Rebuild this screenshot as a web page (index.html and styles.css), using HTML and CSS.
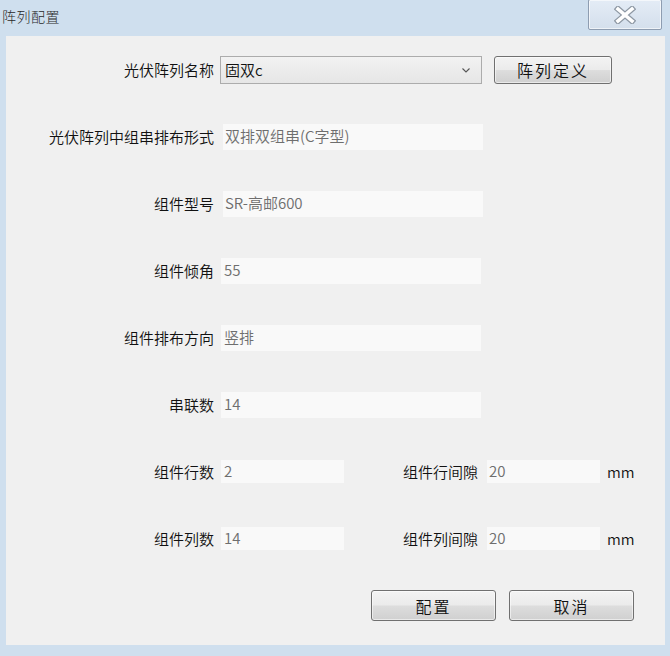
FILE: index.html
```html
<!DOCTYPE html>
<html lang="zh">
<head>
<meta charset="utf-8">
<title>阵列配置</title>
<link rel="stylesheet" href="styles.css">
</head>
<body>
<div class="window">
  <div class="titlebar">
    <span class="title">阵列配置</span>
    <button class="close" aria-label="关闭">
      <svg width="22" height="18" viewBox="0 0 22 18">
        <path d="M4 3 L18 15 M18 3 L4 15" stroke="#8d97a3" stroke-width="6" stroke-linecap="square" fill="none"/>
        <path d="M4 3 L18 15 M18 3 L4 15" stroke="#ffffff" stroke-width="3.6" stroke-linecap="square" fill="none"/>
      </svg>
    </button>
  </div>
  <div class="panel">
    <div class="row">
      <label class="lbl">光伏阵列名称</label>
      <div class="combo">
        <span>固双c</span>
        <svg class="chev" width="8" height="5" viewBox="0 0 8 5"><path d="M0.5 0.5 L4 4 L7.5 0.5" stroke="#555" stroke-width="1.1" fill="none"/></svg>
      </div>
      <button class="btn btn-def">阵列定义</button>
    </div>
    <div class="row">
      <label class="lbl">光伏阵列中组串排布形式</label>
      <div class="field wide shift">双排双组串(C字型)</div>
    </div>
    <div class="row">
      <label class="lbl">组件型号</label>
      <div class="field wide shift">SR-高邮600</div>
    </div>
    <div class="row">
      <label class="lbl">组件倾角</label>
      <div class="field wide">55</div>
    </div>
    <div class="row">
      <label class="lbl">组件排布方向</label>
      <div class="field wide">竖排</div>
    </div>
    <div class="row">
      <label class="lbl">串联数</label>
      <div class="field wide">14</div>
    </div>
    <div class="row">
      <label class="lbl">组件行数</label>
      <div class="field short">2</div>
      <label class="lbl2">组件行间隙</label>
      <div class="field gapf">20</div>
      <span class="unit">mm</span>
    </div>
    <div class="row">
      <label class="lbl">组件列数</label>
      <div class="field short">14</div>
      <label class="lbl2">组件列间隙</label>
      <div class="field gapf">20</div>
      <span class="unit">mm</span>
    </div>
    <div class="row actions">
      <button class="btn btn-act">配置</button>
      <button class="btn btn-act">取消</button>
    </div>
  </div>
</div>
</body>
</html>
```
FILE: styles.css
```css
* { box-sizing: border-box; }
html, body {
  margin: 0;
  padding: 0;
  width: 670px;
  height: 656px;
  overflow: hidden;
  background: #cfdfee;
  font-family: "Noto Sans CJK SC", "Noto Sans", sans-serif;
}
.window {
  width: 670px;
  height: 656px;
  display: flex;
  flex-direction: column;
}
.titlebar {
  height: 36px;
  display: flex;
  align-items: flex-start;
  justify-content: space-between;
}
.title {
  margin: 5px 0 0 2px;
  font-size: 14px;
  line-height: 22px;
  font-weight: 300;
  color: #2a2a2a;
  letter-spacing: 0.5px;
}
.close {
  margin: -1px 8px 0 0;
  width: 74px;
  height: 31px;
  border: 1px solid #8e9db1;
  border-radius: 2px;
  background: linear-gradient(#e4ecf6, #d4dfec);
  display: flex;
  align-items: center;
  justify-content: center;
  padding: 0;
  box-shadow: inset 0 0 0 1px rgba(255,255,255,0.6);
}
.panel {
  margin: 0 5px 0 6px;
  height: 609px;
  background: #f0f0f0;
  display: flex;
  flex-direction: column;
}
.row {
  height: 67px;
  display: flex;
  align-items: center;
  flex: none;
}
.lbl {
  width: 208px;
  text-align: right;
  font-size: 15px;
  font-weight: 350;
  color: #111;
  margin-right: 7px;
  white-space: nowrap;
}
.lbl2 {
  width: 134px;
  text-align: right;
  font-size: 15px;
  font-weight: 350;
  color: #111;
  margin-right: 9px;
  white-space: nowrap;
}
.field {
  height: 26px;
  background: #f9f9f9;
  color: #6e6e6e;
  font-size: 15px;
  font-weight: 350;
  line-height: 24px;
  padding-left: 3px;
  white-space: nowrap;
}
.field.wide { width: 260px; }
.field.shift { margin-left: 2px; padding-left: 2px; }
.field.short { width: 123px; height: 23px; line-height: 22px; }
.field.gapf { width: 113px; height: 23px; line-height: 22px; padding-left: 2px; }
.unit {
  margin-left: 7px;
  font-size: 15px;
  font-weight: 350;
  color: #111;
}
.combo {
  width: 262px;
  height: 28px;
  margin-left: -1px;
  border: 1px solid #acacac;
  background: linear-gradient(#f2f2f2, #e6e6e6);
  display: flex;
  align-items: center;
  justify-content: space-between;
  padding: 0 11px 0 4px;
  font-size: 15px;
  font-weight: 350;
  color: #111;
}
.chev { margin-top: 1px; }
.btn {
  font-family: "Noto Sans CJK SC", "Noto Sans", sans-serif;
  border: 1px solid #707070;
  border-radius: 3px;
  background: linear-gradient(#f3f3f3 0%, #ebebeb 48%, #dddddd 52%, #d0d0d0 100%);
  color: #111;
  padding: 0;
  font-size: 16px;
  font-weight: 350;
  letter-spacing: 2px;
  box-shadow: inset 0 0 0 1px rgba(255,255,255,0.55);
}
.btn-def {
  margin-left: 12px;
  width: 118px;
  height: 28px;
  line-height: 24px;
}
.actions {
  justify-content: flex-end;
  padding-right: 31px;
  gap: 13px;
}
.btn-act {
  width: 125px;
  height: 31px;
}
```
